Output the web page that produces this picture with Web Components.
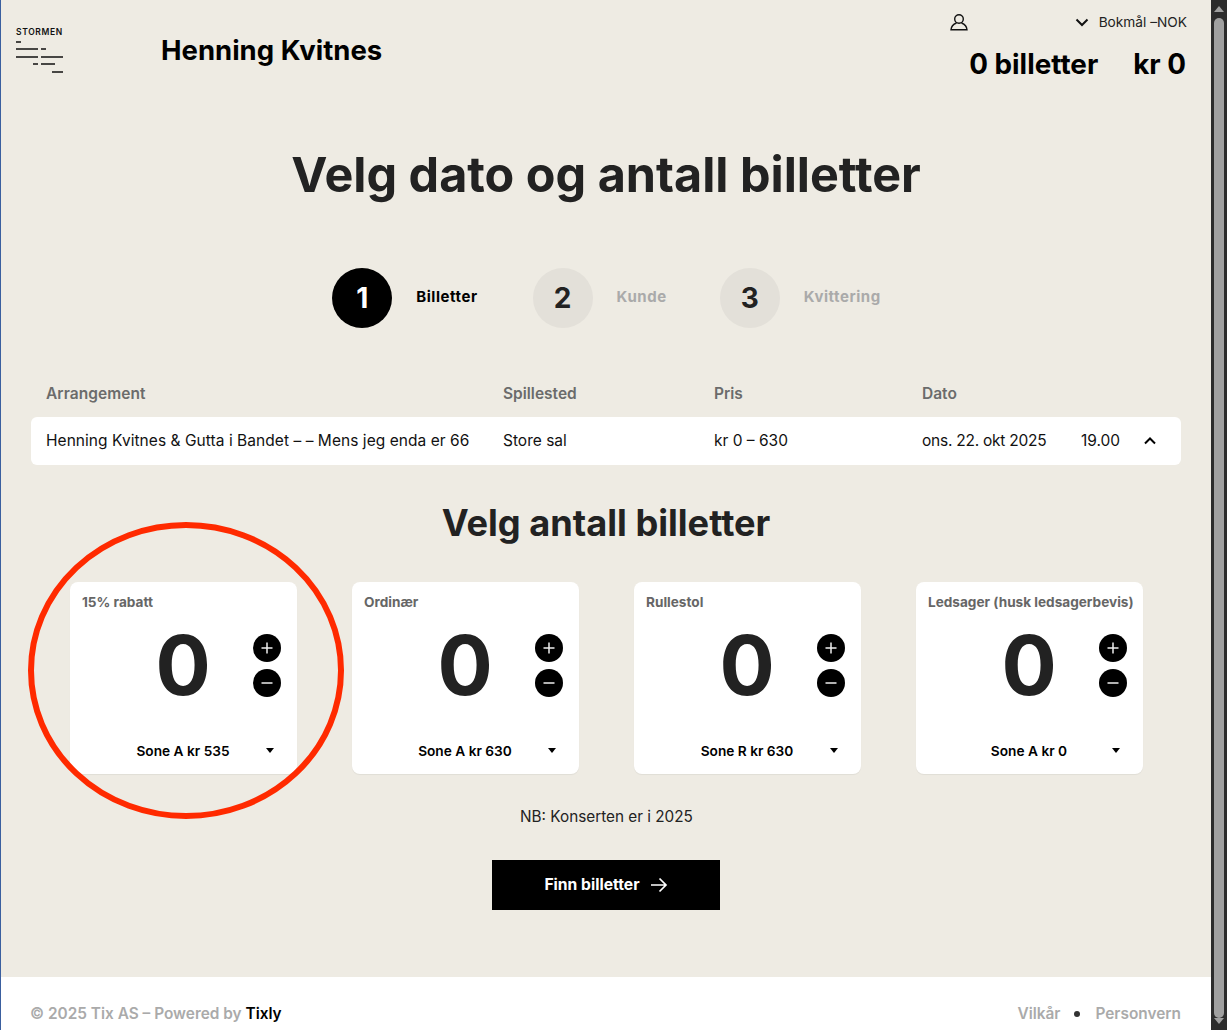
<!DOCTYPE html>
<html lang="no"><head><meta charset="utf-8"><title>Velg dato og antall billetter</title>
<style>
html,body{margin:0;height:100%;overflow:hidden;background:#eeebe3}
body{font-family:Inter,"Liberation Sans",sans-serif;color:#222}
</style></head><body>
<x-app>
  <x-header slot="main"></x-header>
  <h-title slot="main">Velg dato og antall billetter</h-title>
  <x-stepper slot="main">
    <x-step n="1" active>Billetter</x-step>
    <x-step n="2">Kunde</x-step>
    <x-step n="3">Kvittering</x-step>
  </x-stepper>
  <x-event slot="main"></x-event>
  <h-sub slot="main">Velg antall billetter</h-sub>
  <x-cards slot="main">
    <x-card label="15% rabatt" zone="Sone A kr 535"></x-card>
    <x-card label="Ordinær" zone="Sone A kr 630"></x-card>
    <x-card label="Rullestol" zone="Sone R kr 630"></x-card>
    <x-card label="Ledsager (husk ledsagerbevis)" zone="Sone A kr 0"></x-card>
  </x-cards>
  <x-note slot="main">NB: Konserten er i 2025</x-note>
  <x-cta slot="main">Finn billetter</x-cta>
  <x-footer slot="main"></x-footer>
  <x-ring slot="main"></x-ring>
</x-app>
<script>
function def(name, css, html){
  customElements.define(name, class extends HTMLElement{
    connectedCallback(){
      if(this.shadowRoot) return;
      const r=this.attachShadow({mode:'open'});
      r.innerHTML='<style>'+css+'</style>'+(typeof html==='function'?html(this):html);
    }
  });
}
def('x-app',`:host{display:flex;height:1030px;position:relative;overflow:hidden;box-sizing:border-box}
.main{width:1211px;height:1030px;display:flex;flex-direction:column;position:relative;flex:none;border-left:1px solid #3a5f9f;box-sizing:border-box}
.bar{width:16px;flex:none;background:#2c2c2c;position:relative;display:flex;flex-direction:column;align-items:center}
.thumb{position:absolute;left:3px;top:18px;width:10px;height:1000px;background:#a0a0a0;border-radius:5px}
.tri{position:absolute;left:3px;width:0;height:0;border-left:5px solid transparent;border-right:5px solid transparent}
.up{top:6px;border-bottom:6px solid #a0a0a0}.down{bottom:6px;border-top:6px solid #a0a0a0}`,
`<div class="main"><slot name="main"></slot></div><div class="bar"><div class="tri up"></div><div class="thumb"></div><div class="tri down"></div></div>`);

def('x-logo',`:host{display:block;width:48px}
.t{font:600 8.500px/8px Inter,"Liberation Sans",sans-serif;letter-spacing:.65px;color:#111;white-space:nowrap;height:8px;margin-bottom:3px}
svg{display:block}`,
`<div class="t">STORMEN</div><svg width="48" height="35" viewBox="0 0 48 35" fill="none" stroke="#111" stroke-width="1.6"><path d="M0 3h5M0 10h22M25 10h5M0 18h22M25 18h22M17 25h5M25 25h14M36 33h11"/></svg>`);

def('x-header',`:host{display:flex;box-sizing:border-box;height:100px;padding:28px 24px 0 15px;position:relative}
.name{font:700 27.500px/32px Inter,"Liberation Sans",sans-serif;color:#000;margin-left:97px;margin-top:6px;white-space:nowrap}
.right{margin-left:auto;margin-top:-28px;display:flex;flex-direction:column;align-items:flex-end}
.top{display:flex;align-items:center;height:44px;font:400 13.700px/18px Inter,"Liberation Sans",sans-serif;color:#222}
.top svg.user{margin-right:107px}
.top svg.ch{margin-right:10px}
.sum{display:flex;gap:35px;font:700 27.800px/36px Inter,"Liberation Sans",sans-serif;color:#000;margin:2px 1px 0 0}`,
`<x-logo></x-logo><div class="name">Henning Kvitnes</div>
<div class="right"><div class="top">
<svg class="user" width="18" height="18" viewBox="0 0 18 18" fill="none" stroke="#111" stroke-width="1.4"><circle cx="9" cy="6" r="4.300"/><path d="M6.500 10C4 11 1.200 13 1 16.800h16C16.800 13 14 11 11.500 10"/></svg>
<svg class="ch" width="14" height="9" viewBox="0 0 14 9" fill="none" stroke="#111" stroke-width="2"><path d="M1.500 1.500 7 7l5.500-5.500"/></svg>
<span>Bokmål –NOK</span></div>
<div class="sum"><span>0 billetter</span><span>kr 0</span></div></div>`);

def('h-title',`:host{display:block;text-align:center;font:700 48.500px/60px Inter,"Liberation Sans",sans-serif;color:#222;margin-top:45px}`,`<slot></slot>`);

def('x-stepper',`:host{display:flex;justify-content:center;margin-top:63px;padding-left:1px}`,`<slot></slot>`);
def('x-step',`:host{display:flex;align-items:center;margin-right:53px;font:700 15px/18px Inter,"Liberation Sans",sans-serif;letter-spacing:.55px;color:#aaa}
:host(:first-child){margin-right:55px}
:host(:last-child){margin-right:0}
.c{width:60px;height:60px;border-radius:50%;background:#e3e0d9;color:#222;font:700 28px/60px Inter,"Liberation Sans",sans-serif;letter-spacing:0;text-align:center;margin-right:24px}
.s{margin-bottom:2px}
:host([active]){color:#000}
:host([active]) .c{background:#000;color:#fff}`,
e=>`<div class="c">${e.getAttribute('n')}</div><span class="s"><slot></slot></span>`);

def('x-event',`:host{display:block;margin:54px 30px 0;font:400 15.500px/20px Inter,"Liberation Sans",sans-serif;color:#111}
.g{display:grid;grid-template-columns:457px 211px 208px 159px 1fr;padding:0 15px;align-items:center}
.h{font-weight:600;color:#6b6b6b;height:24px;font-size:15.500px}
.h span:first-child{letter-spacing:.05px}
.r{background:#fff;border-radius:6px;height:48px;margin-top:11px}
.a{letter-spacing:.05px}
.dt{letter-spacing:-.24px}
.time{display:flex;justify-content:space-between;align-items:center;padding-right:10px}`,
`<div class="g h"><span>Arrangement</span><span>Spillested</span><span>Pris</span><span>Dato</span></div>
<div class="g r"><span class="a">Henning Kvitnes &amp; Gutta i Bandet – – Mens jeg enda er 66</span><span>Store sal</span><span>kr 0 – 630</span><span class="dt">ons. 22. okt 2025</span>
<span class="time">19.00<svg width="12" height="8" viewBox="0 0 12 8" fill="none" stroke="#000" stroke-width="2"><path d="M1 6.500 6 1.500l5 5"/></svg></span></div>`);

def('h-sub',`:host{display:block;text-align:center;font:700 36.200px/42px Inter,"Liberation Sans",sans-serif;color:#222;margin-top:37px}`,`<slot></slot>`);
def('x-cards',`:host{display:flex;gap:55px;margin:38px 0 0 69px}`,`<slot></slot>`);
def('x-card',`:host{display:flex;flex-direction:column;box-sizing:border-box;width:227px;height:192px;background:#fff;border-radius:8px;box-shadow:0 1px 1px rgba(0,0,0,.06);padding:12px 13px 0 12px}
.l{font:700 13.600px/17px Inter,"Liberation Sans",sans-serif;color:#666;white-space:nowrap}
.mid{display:flex;margin-top:16px;height:78px;position:relative}
.n{position:absolute;left:73.500px;top:0;font:700 82px/78px Inter,"Liberation Sans",sans-serif;color:#222}
.btns{position:absolute;left:171px;top:7px;display:flex;flex-direction:column;gap:7px}
.b{display:block;width:28px;height:28px}
.z{display:flex;margin-top:37px;position:relative;justify-content:center;font:600 13.700px/18px Inter,"Liberation Sans",sans-serif;color:#000;white-space:nowrap}
.z i{position:absolute;right:10px;top:6px;width:0;height:0;border-left:4px solid transparent;border-right:4px solid transparent;border-top:5px solid #000}`,
e=>`<div class="l">${e.getAttribute('label')}</div>
<div class="mid"><div class="n">0</div><div class="btns">
<svg class="b" viewBox="0 0 28 28"><circle cx="14" cy="14" r="14"/><path d="M8.500 14h11M14 8.500v11" stroke="#eee" stroke-width="1.500"/></svg>
<svg class="b" viewBox="0 0 28 28"><circle cx="14" cy="14" r="14"/><path d="M8.500 14h11" stroke="#eee" stroke-width="1.500"/></svg>
</div></div>
<div class="z"><span>${e.getAttribute('zone')}</span><i></i></div>`);

def('x-note',`:host{display:block;text-align:center;font:400 15.300px/20px Inter,"Liberation Sans",sans-serif;color:#222;margin-top:33px;padding-left:1px}`,`<slot></slot>`);
def('x-cta',`:host{display:flex;align-self:center;align-items:center;justify-content:center;gap:10px;width:228px;height:50px;background:#000;color:#fff;font:700 15.700px/18px Inter,"Liberation Sans",sans-serif;margin-top:33px}`,
`<span><slot></slot></span><svg width="18" height="16" viewBox="0 0 18 16" fill="none" stroke="#fff" stroke-width="1.700"><path d="M1 8h15M9.500 1.500 16 8l-6.500 6.500"/></svg>`);
def('x-footer',`:host{display:flex;align-items:flex-start;background:#fff;box-sizing:border-box;margin-top:auto;height:53px;padding:27px 30px 0 29px;font:600 15.400px/20px Inter,"Liberation Sans",sans-serif;color:#aaa}
b{font-weight:600;color:#000}
.r{margin-left:auto;display:flex;align-items:center}
.d{width:6px;height:6px;background:#333;border-radius:50%;margin:0 15px 0 14px}`,
`<span>© 2025 Tix AS – Powered by <b>Tixly</b></span><div class="r"><span>Vilkår</span><i class="d"></i><span>Personvern</span></div>`);
def('x-ring',`:host{position:absolute;left:26px;top:521px;width:318px;height:300px;pointer-events:none}svg{display:block}`,
`<svg width="318" height="300" viewBox="0 0 318 300"><ellipse cx="159" cy="149.500" rx="155" ry="145.500" fill="none" stroke="#ff2a00" stroke-width="6"/></svg>`);
</script>
</body></html>
